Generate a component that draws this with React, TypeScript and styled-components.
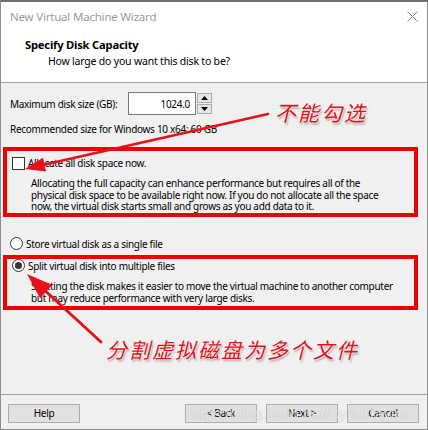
import React from 'react';
import styled, { createGlobalStyle } from 'styled-components';

const GlobalStyle = createGlobalStyle`
  html, body { margin: 0; padding: 0; background: #ffffff; }
  #root { width: 428px; height: 430px; }
`;

const UI_FONT = `'Noto Sans', 'DejaVu Sans', sans-serif`;

const Window = styled.div`
  position: relative;
  width: 428px;
  height: 430px;
  box-sizing: border-box;
  border: 1px solid #8f8f8f;
  border-top: 2px solid #6f6f6f;
  display: flex;
  flex-direction: column;
  background: #f0f0f0;
  font-family: ${UI_FONT};
  font-size: 10px;
  letter-spacing: -0.3px;
  color: #000;
  overflow: hidden;
`;

const TitleBar = styled.div`
  height: 28px;
  background: #ffffff;
  display: flex;
  align-items: center;
  justify-content: space-between;
  padding: 0 9px 0 9px;
  box-sizing: border-box;
`;

const TitleText = styled.span`
  font-size: 11.5px;
  color: #9a9a9a;
  letter-spacing: -0.2px;
`;

const Header = styled.div`
  height: 53px;
  background: #ffffff;
  border-bottom: 1px solid #a0a0a0;
  box-sizing: border-box;
  display: flex;
  flex-direction: column;
  padding: 8px 0 0 24px;
`;

const HeaderTitle = styled.div`
  font-weight: 700;
  font-size: 11.2px;
  line-height: 14px;
  letter-spacing: -0.2px;
`;

const HeaderSub = styled.div`
  font-size: 10.5px;
  line-height: 14px;
  margin-top: 2px;
  padding-left: 23px;
  letter-spacing: -0.2px;
`;

const Body = styled.div`
  flex: 1;
  display: flex;
  flex-direction: column;
  padding: 9px 0 0 0;
`;

const Indented = styled.div`
  padding-left: 9px;
`;

const SizeRow = styled.div`
  display: flex;
  align-items: center;
  height: 23px;
  padding-left: 9px;
`;

const Label = styled.span`
  width: 118px;
  line-height: 14px;
`;

const NumberBox = styled.div`
  width: 68px;
  height: 23px;
  box-sizing: border-box;
  background: #ffffff;
  border: 1px solid #7a7a7a;
  display: flex;
  align-items: center;
  justify-content: flex-end;
  padding-right: 5px;
`;

const Spinner = styled.div`
  display: flex;
  flex-direction: column;
  gap: 1px;
  margin-left: 1px;
`;

const SpinButton = styled.div`
  width: 15px;
  height: 10px;
  box-sizing: border-box;
  background: #e6e6e6;
  border: 1px solid #acacac;
  display: flex;
  align-items: center;
  justify-content: center;
`;

const Line = styled.div<{ $mt: number }>`
  line-height: 14px;
  margin-top: ${(p) => p.$mt}px;
`;

const Highlight = styled.div<{ $mt: number; $pb: number }>`
  margin: ${(p) => p.$mt}px 9px 0 2px;
  border: 4px solid #ee0000;
  padding: 0 0 ${(p) => p.$pb}px 5px;
`;

const OptionRow = styled.div<{ $mt: number }>`
  display: flex;
  align-items: center;
  gap: 3px;
  height: 14px;
  margin-top: ${(p) => p.$mt}px;
`;

const CheckBox = styled.span`
  width: 13px;
  height: 13px;
  box-sizing: border-box;
  border: 1px solid #333333;
  background: #ffffff;
`;

const Radio = styled.span<{ $checked?: boolean }>`
  width: 13px;
  height: 13px;
  box-sizing: border-box;
  border-radius: 50%;
  border: 1px solid #333333;
  background: #ffffff;
  display: flex;
  align-items: center;
  justify-content: center;
  &::after {
    content: '';
    width: 7px;
    height: 7px;
    border-radius: 50%;
    background: ${(p) => (p.$checked ? '#333333' : 'transparent')};
  }
`;

const Desc = styled.div<{ $mt: number; $lh: number }>`
  margin-top: ${(p) => p.$mt}px;
  padding-left: 19px;
  line-height: ${(p) => p.$lh}px;
`;

const Footer = styled.div`
  border-top: 1px solid #a0a0a0;
  display: flex;
  align-items: center;
  padding: 8px 8px 6px 7px;
  height: 35px;
  box-sizing: border-box;
`;

const Button = styled.div<{ $push?: boolean }>`
  width: 72px;
  height: 19px;
  box-sizing: border-box;
  background: #e1e1e1;
  border: 1px solid #adadad;
  display: flex;
  align-items: center;
  justify-content: center;
  margin-left: ${(p) => (p.$push ? 'auto' : '9px')};
  &:first-child { margin-left: 0; }
`;

const Overlay = styled.svg`
  position: absolute;
  left: 0;
  top: 0;
  pointer-events: none;
`;

const Note = styled.div<{ $x: number; $y: number }>`
  position: absolute;
  left: ${(p) => p.$x}px;
  top: ${(p) => p.$y}px;
  font-family: 'Noto Sans CJK SC', sans-serif;
  font-size: 21px;
  font-weight: 400;
  letter-spacing: 2px;
  color: #e3101a;
  white-space: nowrap;
  font-style: italic;
  text-shadow: 0 0 2px #ffffff, 0 0 2px #ffffff, 1px 2px 2px rgba(0, 0, 0, 0.35);
`;

const Watermark = styled.div`
  position: absolute;
  left: 187px;
  top: 403px;
  font-family: 'Liberation Sans', sans-serif;
  font-size: 15px;
  letter-spacing: 0.1px;
  color: rgba(255, 255, 255, 0.75);
  text-shadow: 0 0 1px rgba(90, 90, 90, 0.45);
  white-space: nowrap;
  pointer-events: none;
`;

const Arrow = ({ x1, y1, x2, y2, len, half, w }: { x1: number; y1: number; x2: number; y2: number; len: number; half: number; w: number }) => {
  const dx = x2 - x1;
  const dy = y2 - y1;
  const L = Math.hypot(dx, dy);
  const ux = dx / L;
  const uy = dy / L;
  const bx = x2 - ux * len;
  const by = y2 - uy * len;
  const nx = -uy * half;
  const ny = ux * half;
  return (
    <g>
      <line x1={x1} y1={y1} x2={bx + ux * 2} y2={by + uy * 2} stroke="#e8111b" strokeWidth={w} strokeLinecap="round" />
      <polygon points={`${x2},${y2} ${bx + nx},${by + ny} ${bx - nx},${by - ny}`} fill="#e8111b" />
    </g>
  );
};

export default function App() {
  return (
    <>
      <GlobalStyle />
      <Window>
        <TitleBar>
          <TitleText>New Virtual Machine Wizard</TitleText>
          <svg width="11" height="11" viewBox="0 0 11 11">
            <path d="M0.5 0.5 L10.5 10.5 M10.5 0.5 L0.5 10.5" stroke="#8a8a8a" strokeWidth="1" />
          </svg>
        </TitleBar>
        <Header>
          <HeaderTitle>Specify Disk Capacity</HeaderTitle>
          <HeaderSub>How large do you want this disk to be?</HeaderSub>
        </Header>
        <Body>
          <SizeRow>
            <Label>Maximum disk size (GB):</Label>
            <NumberBox>1024.0</NumberBox>
            <Spinner>
              <SpinButton>
                <svg width="7" height="4" viewBox="0 0 7 4"><path d="M0 4 L3.5 0 L7 4 Z" fill="#000" /></svg>
              </SpinButton>
              <SpinButton>
                <svg width="7" height="4" viewBox="0 0 7 4"><path d="M0 0 L3.5 4 L7 0 Z" fill="#000" /></svg>
              </SpinButton>
            </Spinner>
          </SizeRow>
          <Indented>
            <Line $mt={7}>Recommended size for Windows 10 x64: 60 GB</Line>
          </Indented>
          <Highlight $mt={11} $pb={0}>
            <OptionRow $mt={5}>
              <CheckBox />
              <span>Allocate all disk space now.</span>
            </OptionRow>
            <Desc $mt={8} $lh={11.5}>
              Allocating the full capacity can enhance performance but requires all of the
              <br />
              physical disk space to be available right now. If you do not allocate all the space
              <br />
              now, the virtual disk starts small and grows as you add data to it.
            </Desc>
          </Highlight>
          <Indented>
            <OptionRow $mt={20}>
              <Radio />
              <span>Store virtual disk as a single file</span>
            </OptionRow>
          </Indented>
          <Highlight $mt={4} $pb={2}>
            <OptionRow $mt={0}>
              <Radio $checked />
              <span>Split virtual disk into multiple files</span>
            </OptionRow>
            <Desc $mt={7} $lh={12}>
              Splitting the disk makes it easier to move the virtual machine to another computer
              <br />
              but may reduce performance with very large disks.
            </Desc>
          </Highlight>
        </Body>
        <Footer>
          <Button>Help</Button>
          <Button $push>&lt; Back</Button>
          <Button>Next &gt;</Button>
          <Button>Cancel</Button>
        </Footer>
        <Overlay width="428" height="430" viewBox="0 0 428 430">
          <Arrow x1={267} y1={112} x2={24} y2={167} len={20} half={7} w={2.5} />
          <Arrow x1={100} y1={340} x2={26} y2={272} len={26} half={9} w={3} />
        </Overlay>
        <Note $x={274} $y={95}>不能勾选</Note>
        <Note $x={105} $y={332}>分割虚拟磁盘为多个文件</Note>
        <Watermark>https://blog.csdn.net/CyndiTaylor</Watermark>
      </Window>
    </>
  );
}
